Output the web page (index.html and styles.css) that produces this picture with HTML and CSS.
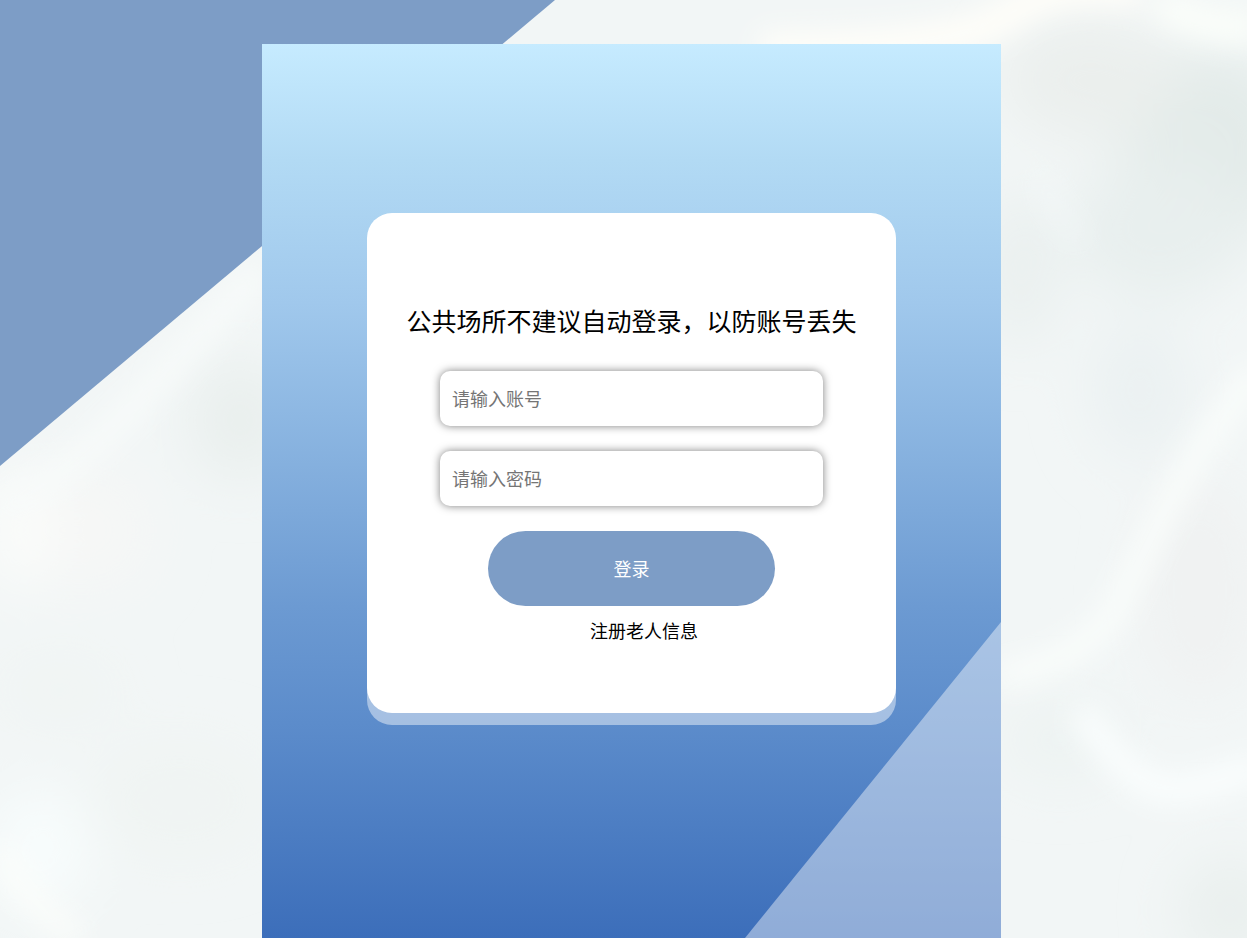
FILE: index.html
```html
<!DOCTYPE html>
<html lang="zh-CN">
<head>
    <meta charset="UTF-8">
    <meta name="viewport" content="width=device-width, initial-scale=1.0">
    <title>登录</title>
    <link rel="stylesheet" href="styles.css">
</head>
<body>
<!-- marble backdrop with the blue corner -->
<svg class="backdrop" viewBox="0 0 1247 938" preserveAspectRatio="none" aria-hidden="true">
    <defs>
        <filter id="wide" x="-50%" y="-50%" width="200%" height="200%">
            <feGaussianBlur stdDeviation="28"/>
        </filter>
        <filter id="soft" x="-50%" y="-50%" width="200%" height="200%">
            <feGaussianBlur stdDeviation="14"/>
        </filter>
    </defs>
    <rect width="1247" height="938" fill="#f2f6f6"/>
    <g filter="url(#wide)">
        <ellipse cx="1210" cy="150" rx="90" ry="100" fill="#e3ebe9"/>
        <ellipse cx="1090" cy="80" rx="90" ry="60" fill="#ebefed"/>
        <ellipse cx="1160" cy="230" rx="90" ry="70" fill="#e8efee"/>
        <ellipse cx="1020" cy="270" rx="40" ry="80" fill="#eaf0ef"/>
        <ellipse cx="1140" cy="390" rx="50" ry="70" fill="#ebf1f2"/>
        <ellipse cx="1200" cy="590" rx="60" ry="110" fill="#f0f2f2"/>
        <ellipse cx="1230" cy="910" rx="50" ry="50" fill="#e9efed"/>
        <ellipse cx="1060" cy="740" rx="60" ry="40" fill="#edf3f2"/>
        <ellipse cx="240" cy="420" rx="50" ry="60" fill="#e9efed"/>
        <ellipse cx="90" cy="530" rx="60" ry="60" fill="#f6f7f6"/>
        <ellipse cx="180" cy="800" rx="90" ry="60" fill="#f0f4f3"/>
        <ellipse cx="60" cy="690" rx="60" ry="30" fill="#f0f4f3"/>
        <ellipse cx="20" cy="530" rx="30" ry="60" fill="#fcfdfb"/>
        <ellipse cx="40" cy="850" rx="50" ry="60" fill="#f8fdfd"/>
    </g>
    <g class="veins" filter="url(#soft)">
        <path d="M760 50 Q960 50 1010 14 T1140 -8" stroke="#fffef9" stroke-width="34"/>
        <path d="M1160 0 Q1190 28 1260 28" stroke="#fbfefa" stroke-width="34"/>
        <path d="M0 510 Q60 480 110 430 T260 270" stroke="#f8fbfa" stroke-width="26"/>
        <path d="M1260 370 Q1200 440 1160 520 T1110 620 Q1060 670 1000 675" stroke="#fbfefc" stroke-width="22"/>
        <path d="M1040 170 Q1050 210 1080 240" stroke="#f3f8f8" stroke-width="14"/>
        <path d="M1080 710 Q1120 770 1150 785 T1260 765" stroke="#fbfefe" stroke-width="26"/>
        <path d="M0 850 Q30 910 80 938" stroke="#fdfefb" stroke-width="18"/>
    </g>
    <polygon points="0,0 555,0 0,466" fill="#7d9dc6"/>
</svg>
<div class="page">
    <main class="panel">
        <form class="card" action="#" method="post">
            <h1>公共场所不建议自动登录，以防账号丢失</h1>
            <input type="text" name="username" placeholder="请输入账号" aria-label="账号">
            <input type="password" name="password" placeholder="请输入密码" aria-label="密码">
            <button type="submit">登录</button>
            <a class="register" href="#">注册老人信息</a>
        </form>
        <svg class="corner" viewBox="0 0 256 316" preserveAspectRatio="none" aria-hidden="true">
            <polygon points="256,0 256,316 0,316"/>
        </svg>
    </main>
</div>
</body>
</html>
```
FILE: styles.css
```css
* {
    box-sizing: border-box;
}
body {
    margin: 0;
    font-family: "Noto Sans CJK SC", "Microsoft YaHei", sans-serif;
    background-color: #f2f6f6;
}
.backdrop {
    position: fixed;
    top: 0;
    left: 0;
    width: 100%;
    height: 100%;
    z-index: -1;
}
.veins path {
    fill: none;
}
.page {
    display: flex;
    justify-content: center;
    min-height: 100vh;
    padding: 44px 0 0 16px;
}
.panel {
    position: relative;
    display: flex;
    flex-direction: column;
    align-items: center;
    width: 60%;
    min-width: 529px;
    padding: 169px 0 213px;
    background: linear-gradient(#c6ebff 0%, #b2daf4 13%, #a0c8ec 29%, #85b0de 47%, #6c9ad2 63%, #5c8ccb 76%, #3c6eba 100%);
}
.corner {
    position: absolute;
    right: 0;
    bottom: 0;
    width: 256px;
    height: 316px;
    fill: rgba(255, 255, 255, 0.43);
}
.card {
    position: relative;
    z-index: 1;
    display: flex;
    flex-direction: column;
    align-items: center;
    width: 529px;
    height: 500px;
    padding-top: 89px;
    border-radius: 25px;
    background-color: #fff;
    box-shadow: 0 12px rgba(255, 255, 255, 0.45);
}
h1 {
    margin: 0 0 33px;
    font-size: 25px;
    font-weight: 400;
    line-height: 36px;
    white-space: nowrap;
}
input {
    width: 383px;
    height: 55px;
    margin-bottom: 25px;
    padding: 0 12px 2px;
    border: none;
    border-radius: 10px;
    font-family: inherit;
    font-size: 18px;
    background-color: #fff;
    box-shadow: 0 0 8px rgba(0, 0, 0, 0.5);
}
input::placeholder {
    color: #757575;
}
button {
    width: 287px;
    height: 75px;
    padding: 0 0 2px;
    border: none;
    border-radius: 38px;
    font-family: inherit;
    font-size: 18px;
    color: #fff;
    background-color: #7d9dc6;
    cursor: pointer;
}
button:hover {
    background-color: #6c8db8;
}
.register {
    margin: 11px 0 0 25px;
    font-size: 18px;
    line-height: 26px;
    color: #000;
    text-decoration: none;
}
```
